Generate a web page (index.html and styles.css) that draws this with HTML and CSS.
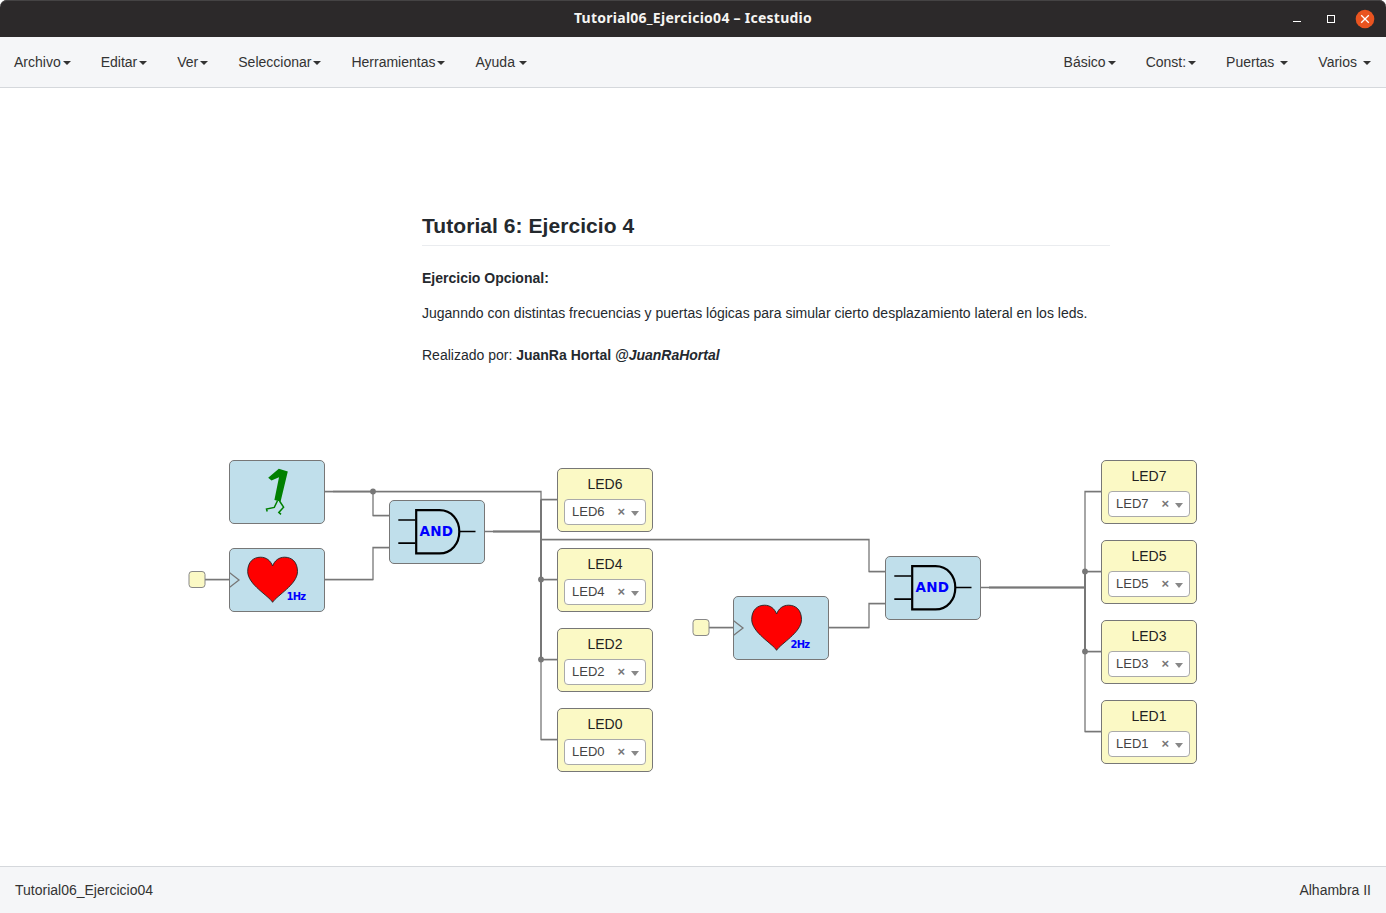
FILE: index.html
```html
<!DOCTYPE html>
<html lang="es">
<head>
<meta charset="utf-8">
<title>Tutorial06_Ejercicio04 – Icestudio</title>
<link rel="stylesheet" href="styles.css">
</head>
<body>
<div class="window">
  <header class="titlebar">
    <span class="title">Tutorial06_Ejercicio04 – Icestudio</span>
    <svg class="controls" width="90" height="37" viewBox="1290 0 90 37">
      <path d="M1293 21.5h8" stroke="#fff"/>
      <rect x="1327.5" y="15.5" width="7" height="7" fill="none" stroke="#fff"/>
      <circle cx="1365" cy="19" r="9.3" fill="#e95420"/>
      <path d="M1361.2 15.2l7.6 7.6m0-7.6l-7.6 7.6" stroke="#fff" stroke-width="1.3"/>
    </svg>
  </header>
  <nav class="menubar">
    <div class="menu first">
      <span class="item">Archivo<i class="caret"></i></span>
      <span class="item">Editar<i class="caret"></i></span>
      <span class="item">Ver<i class="caret"></i></span>
      <span class="item">Seleccionar<i class="caret"></i></span>
      <span class="item">Herramientas<i class="caret"></i></span>
      <span class="item wide">Ayuda<i class="caret"></i></span>
    </div>
    <div class="menu">
      <span class="item">Básico<i class="caret"></i></span>
      <span class="item">Const:<i class="caret"></i></span>
      <span class="item wide">Puertas<i class="caret"></i></span>
      <span class="item wide">Varios<i class="caret"></i></span>
    </div>
  </nav>
  <main class="canvas">
    <article class="info">
      <h1>Tutorial 6: Ejercicio 4</h1>
      <p class="lead"><b>Ejercicio Opcional:</b></p>
      <p class="desc">Juganndo con distintas frecuencias y puertas lógicas para simular cierto desplazamiento lateral en los leds.</p>
      <p class="author">Realizado por: <b>JuanRa Hortal <em>@JuanRaHortal</em></b></p>
    </article>

    <svg class="wires" width="1386" height="778" viewBox="0 88 1386 778">
      <defs>
        <g id="and-gate" fill="none" stroke="#000">
          <path d="M27.2 10.2H50.5C62.5 10.2 70.3 19.9 70.3 31.7S62.5 53.4 50.5 53.4H27.2Z" stroke-width="2.2"/>
          <path d="M9.3 20h17M9.3 43.1h17M70.5 31.5h16" stroke-width="1.6"/>
        </g>
        <path id="heart" d="M43.6 54.3C39.8 47.8 18.7 36.5 18.7 23.5C18.7 14 24.3 9.2 31.5 9.2C37.3 9.2 41.5 12.5 43.6 18C45.7 12.5 49.9 9.2 55.7 9.2C62.9 9.2 68.5 14 68.5 23.5C68.5 36.5 47.4 47.8 43.6 54.3Z" fill="#f00" stroke="#222" stroke-width=".9"/>
      </defs>
      <g class="halo">
        <path d="M325 492.5H541M373 516.5H389M325 580.5H373M373 548.5H389M541 500.5H557M541 540.5H869M541 580.5H557M541 660.5H557M541 740.5H557M869 572.5H885M829 628.5H869M869 604.5H885M1085 492.5H1101M1085 572.5H1101M1085 652.5H1101M1085 732.5H1101M205 580.5H229M709 628.5H733"/>
      </g>
      <g class="wire">
        <path d="M325 491.5H541V539.5H869V571.5H885M373 491.5V515.5H389M325 579.5H373V547.5H389M485 531.5H541V499.5H557M541 531.5V739.5H557M541 579.5H557M541 659.5H557M829 627.5H869V603.5H885M981 587.5H1085V491.5H1101M1085 571.5H1101M1085 587.5V731.5H1101M1085 651.5H1101M205 579.5H229M709 627.5H733"/>
        <path class="thick" d="M493 531.5H541M541 499.5V660M989 587.5H1085M1085 571.5V652"/>
        <path d="M333 491.5H373"/>
      </g>
      <g fill="#777">
        <circle cx="373" cy="491.5" r="2.9"/><circle cx="541" cy="579.5" r="2.9"/><circle cx="541" cy="659.5" r="2.9"/>
        <circle cx="1085" cy="571.5" r="2.9"/><circle cx="1085" cy="651.5" r="2.9"/>
      </g>
      <g fill="#fbf9c5" stroke="#888">
        <rect x="189" y="571.5" width="16" height="16" rx="3"/>
        <rect x="693" y="619.5" width="16" height="16" rx="3"/>
      </g>
    </svg>

    <div class="node code n-one">
      <svg width="96" height="64">
        <path d="M39.2 17.8L49.8 8.8L58.8 11.5L51.6 41.5L45.4 40L50 17.3L42.5 20.6Z" fill="green"/>
        <path d="M48.6 40.5L45.3 47.4L37.5 49L38.2 51.5M50.5 41L54.6 47.2L49.8 52.4L52 54.4" fill="none" stroke="green" stroke-width="1.5"/>
      </svg>
    </div>
    <div class="node code n-heart1">
      <svg width="96" height="64">
        <path class="clock" d="M0 24.3L10 32L0 39.7"/>
        <use href="#heart"/><text class="hz" x="57.5" y="51.6" textLength="19.5">1Hz</text>
      </svg>
    </div>
    <div class="node code n-and1">
      <svg width="96" height="64"><use href="#and-gate"/><text class="gate" x="30.5" y="36" textLength="33.4">AND</text></svg>
    </div>
    <div class="node code n-heart2">
      <svg width="96" height="64">
        <path class="clock" d="M0 24.3L10 32L0 39.7"/>
        <use href="#heart"/><text class="hz" x="57.5" y="51.6" textLength="19.5">2Hz</text>
      </svg>
    </div>
    <div class="node code n-and2">
      <svg width="96" height="64"><use href="#and-gate"/><text class="gate" x="30.5" y="36" textLength="33.4">AND</text></svg>
    </div>

    <div class="column left">
      <div class="node led"><span>LED6</span><div class="select">LED6<b>×</b><i></i></div></div>
      <div class="node led"><span>LED4</span><div class="select">LED4<b>×</b><i></i></div></div>
      <div class="node led"><span>LED2</span><div class="select">LED2<b>×</b><i></i></div></div>
      <div class="node led"><span>LED0</span><div class="select">LED0<b>×</b><i></i></div></div>
    </div>
    <div class="column right">
      <div class="node led"><span>LED7</span><div class="select">LED7<b>×</b><i></i></div></div>
      <div class="node led"><span>LED5</span><div class="select">LED5<b>×</b><i></i></div></div>
      <div class="node led"><span>LED3</span><div class="select">LED3<b>×</b><i></i></div></div>
      <div class="node led"><span>LED1</span><div class="select">LED1<b>×</b><i></i></div></div>
    </div>
  </main>
  <footer class="statusbar"><span>Tutorial06_Ejercicio04</span><span>Alhambra II</span></footer>
</div>
</body>
</html>
```
FILE: styles.css
```css
* { box-sizing: border-box; }
body { margin: 0; background: #fff; font: 14px/20px "Liberation Sans", Arial, sans-serif; color: #333; }
.window { display: flex; flex-direction: column; width: 1386px; height: 913px; overflow: hidden; }
.titlebar { display: grid; grid-template-columns: 1fr auto 1fr; height: 37px; flex: none; background: #2c292a; border-radius: 7px 7px 0 0; box-shadow: inset 0 1px #454344; }
.title { grid-column: 2; font: bold 14px/36px "Noto Sans", sans-serif; letter-spacing: .26px; color: #f5f4f2; white-space: nowrap; }
.controls { justify-self: end; margin-right: 6px; }
.menubar { display: flex; justify-content: space-between; flex: none; height: 51px; background: #f5f6f8; border-bottom: 1px solid #d5d8dc; }
.menu { display: flex; }
.first { margin-left: -1px; }
.item { display: flex; align-items: center; padding: 0 15px; }
.caret { border: 4px solid transparent; border-top-color: #333; border-bottom: 0; margin: 1px 0 0 2px; }
.wide .caret { margin-left: 6px; }
.first .wide .caret { margin-left: 4px; }
.canvas { position: relative; flex: 1; background: #fff; }
.info { width: 688px; margin-left: 422px; padding-top: 124px; color: #24292e; }
.info h1 { margin: 0; height: 34px; font-size: 21px; line-height: 28px; letter-spacing: .06px; border-bottom: 1px solid #eaecef; }
.info p { margin: 0; line-height: 21px; white-space: nowrap; }
.info .lead { margin-top: 22px; }
.info .desc { margin-top: 14px; }
.info .author { margin-top: 21px; }
.wires { position: absolute; left: 0; top: 0; }
.wire { fill: none; stroke: #777; stroke-width: 1.3; }
.thick { stroke-width: 2; }
.halo { stroke: #ddd; stroke-width: 1; }
.node { width: 96px; height: 64px; border: 1px solid #777; border-radius: 5px; }
.node > svg { display: block; margin: -1px; }
.code { position: absolute; background: #c0dfeb; }
.n-one { left: 229px; top: 372px; }
.n-heart1 { left: 229px; top: 460px; }
.n-and1 { left: 389px; top: 412px; }
.n-heart2 { left: 733px; top: 508px; }
.n-and2 { left: 885px; top: 468px; }
.clock { fill: none; stroke: #777; stroke-width: 1.3; }
.hz { font: bold 10px "DejaVu Sans", sans-serif; fill: #00f; }
.gate { font: bold 13.5px "DejaVu Sans", sans-serif; fill: #00f; }
.column { position: absolute; display: flex; flex-direction: column; gap: 16px; }
.left { left: 557px; top: 380px; }
.right { left: 1101px; top: 372px; }
.led { display: flex; flex-direction: column; align-items: center; padding-top: 5px; background: #fbf9c5; color: #222; }
.select { display: flex; align-items: center; width: 82px; height: 26px; margin-top: 5px; padding: 0 6px 1px 7px; background: #fff; border: 1px solid #aaa; border-radius: 4px; color: #444; font-size: 13px; }
.select b { margin-left: auto; color: #777; font-size: 13px; }
.select i { border: 4px solid transparent; border-top: 5px solid #888; border-bottom: 0; margin: 4px 0 0 6px; }
.statusbar { display: flex; flex: none; justify-content: space-between; align-items: center; height: 47px; padding: 0 15px; background: #f5f6f8; border-top: 1px solid #d5d8dc; }
```
